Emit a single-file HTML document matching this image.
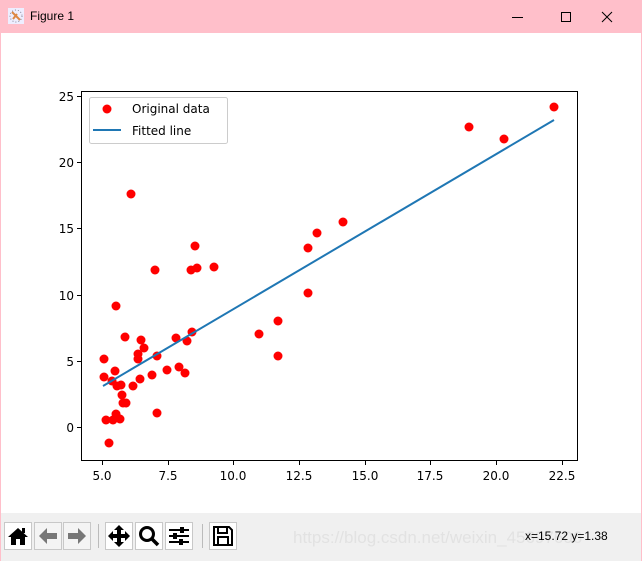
<!DOCTYPE html><html><head><style>
body{margin:0;width:642px;height:562px;overflow:hidden;background:#fff;font-family:"DejaVu Sans","Liberation Sans",sans-serif;}
.win{position:absolute;left:0;top:0;width:640px;height:560px;border:1px solid #ffbfca;border-top:none;}
.title{position:absolute;left:0;top:0;width:642px;height:33px;background:#ffbfca;}
.tb{position:absolute;left:1px;top:513px;width:640px;height:48px;background:#f0f0f0;}
.btn{position:absolute;top:9px;width:28px;height:28px;background:#fff;border:1px solid #c8c8c8;box-sizing:border-box;}
</style></head><body>
<div class="win"></div>
<div class="title">
<svg style="position:absolute;left:8px;top:8px" width="16" height="16"><rect width="16" height="16" fill="#eef"/><circle cx="8" cy="8" r="6" fill="none" stroke="#889" stroke-dasharray="1 2"/><path d="M4 4L12 12M5 11L9 6" stroke="#d84" stroke-width="2"/></svg>
<span style="position:absolute;left:30px;top:9px;font:12px 'Liberation Sans',sans-serif;color:#000">Figure 1</span>
<svg style="position:absolute;left:505px;top:10px" width="130" height="14"><path d="M7 7.5H18" stroke="#000"/><rect x="56.5" y="2.5" width="9" height="9" fill="none" stroke="#000"/><path d="M97 2L107 12M107 2L97 12" stroke="#000"/></svg>
</div>
<svg style="position:absolute;left:0;top:33px" width="642" height="480" viewBox="0 33 642 480" font-family="DejaVu Sans,sans-serif" font-size="12">
<rect x="81.5" y="91.5" width="496" height="369" fill="#fff" stroke="#000"/>
<g stroke="#000">
<path d="M102.5 461v4M168.5 461v4M233.5 461v4M299.5 461v4M365.5 461v4M430.5 461v4M496.5 461v4M562.5 461v4"/>
<path d="M81 427.5h-4M81 361.5h-4M81 295.5h-4M81 228.5h-4M81 162.5h-4M81 96.5h-4"/>
</g>
<g text-anchor="middle" fill="#000">
<text x="102" y="480">5.0</text><text x="168" y="480">7.5</text><text x="233" y="480">10.0</text><text x="299" y="480">12.5</text><text x="365" y="480">15.0</text><text x="430" y="480">17.5</text><text x="496" y="480">20.0</text><text x="562" y="480">22.5</text>
</g>
<g text-anchor="end" fill="#000">
<text x="74" y="432">0</text><text x="74" y="366">5</text><text x="74" y="300">10</text><text x="74" y="233">15</text><text x="74" y="167">20</text><text x="74" y="101">25</text>
</g>
<g fill="#f00">
<circle cx="195" cy="246" r="4.5"/><circle cx="155" cy="270" r="4.5"/><circle cx="191" cy="270" r="4.5"/><circle cx="197" cy="268" r="4.5"/><circle cx="214" cy="267" r="4.5"/><circle cx="116" cy="306" r="4.5"/><circle cx="125" cy="337" r="4.5"/><circle cx="141" cy="340" r="4.5"/><circle cx="144" cy="348" r="4.5"/><circle cx="138" cy="354" r="4.5"/><circle cx="138" cy="359" r="4.5"/><circle cx="104" cy="359" r="4.5"/><circle cx="157" cy="356" r="4.5"/><circle cx="176" cy="338" r="4.5"/><circle cx="187" cy="341" r="4.5"/><circle cx="192" cy="332" r="4.5"/><circle cx="115" cy="371" r="4.5"/><circle cx="104" cy="377" r="4.5"/><circle cx="152" cy="375" r="4.5"/><circle cx="167" cy="370" r="4.5"/><circle cx="179" cy="367" r="4.5"/><circle cx="185" cy="373" r="4.5"/><circle cx="140" cy="379" r="4.5"/><circle cx="133" cy="386" r="4.5"/><circle cx="121" cy="385" r="4.5"/><circle cx="117" cy="386" r="4.5"/><circle cx="112" cy="381" r="4.5"/><circle cx="122" cy="395" r="4.5"/><circle cx="123" cy="403" r="4.5"/><circle cx="126" cy="403" r="4.5"/><circle cx="157" cy="413" r="4.5"/><circle cx="116" cy="414" r="4.5"/><circle cx="106" cy="420" r="4.5"/><circle cx="113" cy="420" r="4.5"/><circle cx="120" cy="419" r="4.5"/><circle cx="117" cy="417" r="4.5"/><circle cx="109" cy="443" r="4.5"/><circle cx="131" cy="194" r="4.5"/><circle cx="259" cy="334" r="4.5"/><circle cx="278" cy="356" r="4.5"/><circle cx="278" cy="321" r="4.5"/><circle cx="308" cy="293" r="4.5"/><circle cx="308" cy="248" r="4.5"/><circle cx="317" cy="233" r="4.5"/><circle cx="343" cy="222" r="4.5"/><circle cx="469" cy="127" r="4.5"/><circle cx="504" cy="139" r="4.5"/><circle cx="554" cy="107" r="4.5"/>
</g>
<path d="M103 386L554 120" stroke="#1f77b4" stroke-width="2"/>
<rect x="89.5" y="97.5" width="138" height="46" rx="2" fill="#fff" fill-opacity="0.8" stroke="#ccc"/>
<circle cx="107" cy="109" r="4.5" fill="#f00"/>
<path d="M93 130H121" stroke="#1f77b4" stroke-width="2"/>
<text x="132" y="113" fill="#000">Original data</text>
<text x="132" y="135" fill="#000">Fitted line</text>
</svg>
<div class="tb">
<div class="btn" style="left:3px"><svg width="26" height="26"><path d="M3 14L13 5L23 14H20V22H15V16H11V22H6V14Z" fill="#000"/><rect x="17" y="5" width="3" height="5"/></svg></div>
<div class="btn" style="left:33px;background:#f4f4f4"><svg width="26" height="26"><path d="M4 13L12 5V10H22V16H12V21Z" fill="#777"/></svg></div>
<div class="btn" style="left:62px;background:#f4f4f4"><svg width="26" height="26"><path d="M22 13L14 5V10H4V16H14V21Z" fill="#777"/></svg></div>
<div style="position:absolute;left:97px;top:11px;width:1px;height:24px;background:#bbb"></div>
<div class="btn" style="left:104px"><svg width="26" height="26"><path d="M13 2L18 7H15V11H19V8L24 13L19 18V15H15V19H18L13 24L8 19H11V15H7V18L2 13L7 8V11H11V7H8Z" fill="#000"/></svg></div>
<div class="btn" style="left:134px"><svg width="26" height="26"><circle cx="11" cy="11" r="6.5" fill="none" stroke="#000" stroke-width="3"/><path d="M15 15L22 22" stroke="#000" stroke-width="3.5"/></svg></div>
<div class="btn" style="left:164px"><svg width="26" height="26"><path d="M3 7H23M3 13H23M3 19H23" stroke="#000" stroke-width="2"/><rect x="14" y="4" width="4" height="6"/><rect x="7" y="10" width="4" height="6"/><rect x="13" y="16" width="4" height="6"/></svg></div>
<div style="position:absolute;left:201px;top:11px;width:1px;height:24px;background:#bbb"></div>
<div class="btn" style="left:208px"><svg width="26" height="26"><path d="M4 4H19L22 7V22H4Z" fill="none" stroke="#000" stroke-width="2"/><rect x="8" y="4" width="9" height="6" fill="none" stroke="#000" stroke-width="2"/><rect x="8" y="14" width="10" height="8" fill="none" stroke="#000" stroke-width="2"/></svg></div>
<span style="position:absolute;left:292px;top:15px;font:17px 'Liberation Sans',sans-serif;color:#e2e2e2;white-space:nowrap">https://blog.csdn.net/weixin_45697606</span>
<span style="position:absolute;left:524px;top:16px;font:12px 'Liberation Sans',sans-serif;color:#000">x=15.72 y=1.38</span>
</div>
</body></html>
